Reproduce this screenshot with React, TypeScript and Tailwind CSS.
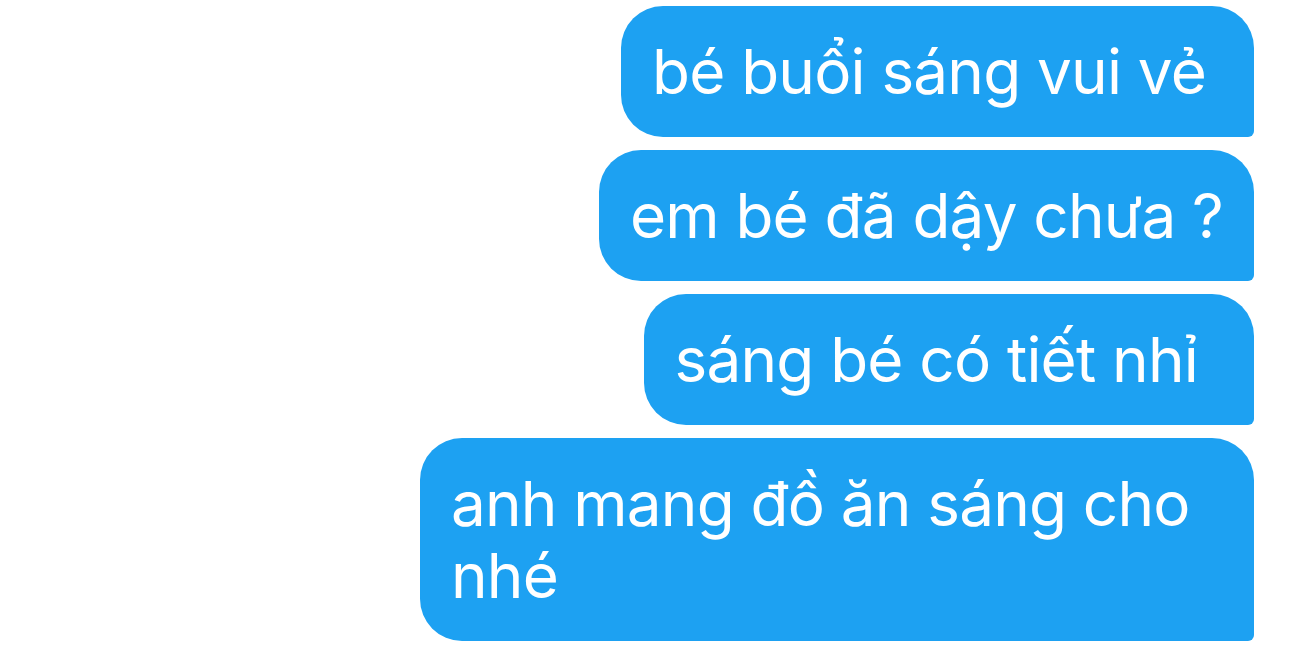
import React from 'react';

const messages = [
  { text: 'bé buổi sáng vui vẻ', pad: 'pr-[48px]' },
  { text: 'em bé đã dậy chưa ?', pad: 'pr-[31px]' },
  { text: 'sáng bé có tiết nhỉ', pad: 'pr-[56px]' },
  { text: 'anh mang đồ ăn sáng cho nhé', pad: 'pr-[34px]' },
];

const Bubble: React.FC<{ text: string; pad: string }> = ({ text, pad }) => (
  <div
    className={`max-w-[834px] rounded-[42px] rounded-br-[6px] bg-[#1da1f2] py-[29.5px] pl-[31px] text-[62px] leading-[72px] tracking-[-0.8px] text-white ${pad}`}
  >
    {text}
  </div>
);

export default function App() {
  return (
    <div
      className="flex h-[651px] w-[1290px] flex-col items-end gap-[13px] overflow-hidden bg-white pr-[36px] pt-[6px]"
      style={{ fontFamily: 'Inter, "Noto Sans", sans-serif' }}
    >
      {messages.map((m) => (
        <Bubble key={m.text} text={m.text} pad={m.pad} />
      ))}
    </div>
  );
}
